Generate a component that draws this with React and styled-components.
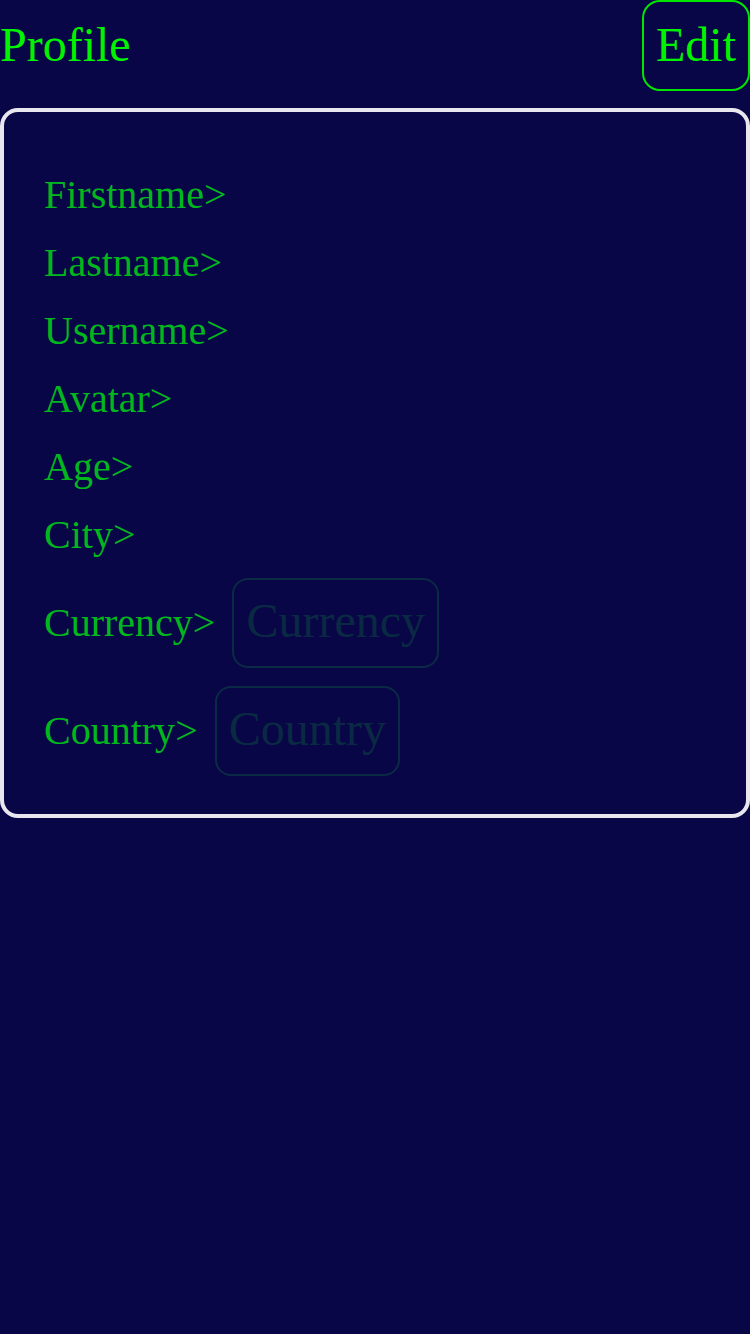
import React from "react";
import styled, { createGlobalStyle } from "styled-components";

const fields = ["Firstname", "Lastname", "Username", "Avatar", "Age", "City"];
const pickers = ["Currency", "Country"];

function App() {
  return (
    <Page>
      <GlobalStyle />
      <Header>
        <Title>Profile</Title>
        <EditButton>Edit</EditButton>
      </Header>
      <Card>
        {fields.map((f) => (
          <Row key={f}>
            <Label>{f}&gt;</Label>
          </Row>
        ))}
        {pickers.map((p) => (
          <Row key={p}>
            <Label>{p}&gt;</Label>
            <Picker>{p}</Picker>
          </Row>
        ))}
      </Card>
    </Page>
  );
}

const GlobalStyle = createGlobalStyle`
  body {
    margin: 0;
    background: #090647;
    font-family: "Liberation Serif", "Times New Roman", serif;
  }
`;

const Page = styled.div`
  min-height: 1334px;
  background: #090647;
`;

const Header = styled.div`
  display: flex;
  justify-content: space-between;
  align-items: flex-start;
  margin-bottom: 17px;
`;

const Title = styled.h1`
  margin: 0;
  padding-top: 17px;
  font-size: 48px;
  font-weight: normal;
  line-height: 55px;
  color: #00f400;
`;

const EditButton = styled.div`
  box-sizing: border-box;
  height: 91px;
  padding: 15px 12px 17px;
  border: 2px solid #00e600;
  border-radius: 18px;
  font-size: 48px;
  line-height: 55px;
  color: #00f400;
`;

const Card = styled.div`
  box-sizing: border-box;
  border: 4px solid #e8e6ee;
  border-radius: 18px;
  padding: 58px 40px 38px;
  display: flex;
  flex-direction: column;
  gap: 18px;
`;

const Row = styled.div`
  display: flex;
  align-items: center;
  gap: 17px;
  min-height: 50px;
`;

const Label = styled.span`
  font-size: 40px;
  line-height: 46px;
  color: #00b81e;
`;

const Picker = styled.div`
  box-sizing: border-box;
  height: 90px;
  padding: 14px 12px 18px;
  border: 2px solid #0b2a45;
  border-radius: 16px;
  font-size: 48px;
  line-height: 54px;
  color: #0a2a44;
`;

export default App;
